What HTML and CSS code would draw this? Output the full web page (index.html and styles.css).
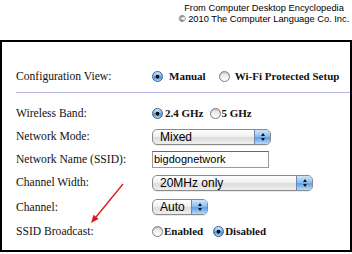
FILE: index.html
```html
<!DOCTYPE html>
<html>
<head>
<meta charset="utf-8">
<link rel="stylesheet" href="styles.css">
</head>
<body>
<div class="credit">
  <div>From Computer Desktop Encyclopedia</div>
  <div>© 2010 The Computer Language Co. Inc.</div>
</div>
<div class="panel">
  <div class="config">
    <span class="label">Configuration View:</span>
    <div class="opts">
      <span class="radio on"></span><span class="opt gap-l6">Manual</span>
      <span class="radio off ml13"></span><span class="opt gap-l5">Wi-Fi Protected Setup</span>
    </div>
  </div>
  <div class="divider"></div>
  <div class="grid">
    <span class="label">Wireless Band:</span>
    <div class="opts">
      <span class="radio on"></span><span class="opt gap-l2">2.4 GHz</span>
      <span class="radio off ml6"></span><span class="opt gap-l1">5 GHz</span>
    </div>

    <span class="label">Network Mode:</span>
    <div class="opts">
      <div class="select w119"><span class="sel-text">Mixed</span><span class="sel-btn"><i class="up"></i><i class="down"></i></span></div>
    </div>

    <span class="label">Network Name (SSID):</span>
    <div class="opts">
      <div class="textbox">bigdognetwork</div>
    </div>

    <span class="label">Channel Width:</span>
    <div class="opts">
      <div class="select w161"><span class="sel-text">20MHz only</span><span class="sel-btn"><i class="up"></i><i class="down"></i></span></div>
    </div>

    <span class="label">Channel:</span>
    <div class="opts">
      <div class="select w56"><span class="sel-text">Auto</span><span class="sel-btn"><i class="up"></i><i class="down"></i></span></div>
    </div>

    <span class="label">SSID Broadcast:</span>
    <div class="opts">
      <span class="radio off"></span><span class="opt gap-l1">Enabled</span>
      <span class="radio on ml10"></span><span class="opt gap-l1">Disabled</span>
    </div>
  </div>
</div>
<svg class="pointer" width="352" height="254" viewBox="0 0 352 254">
  <line x1="123" y1="184" x2="96" y2="217" stroke="#e3151b" stroke-width="1.3"/>
  <polygon points="91,223 98.6,218.9 93.6,214.7" fill="#e3151b"/>
</svg>
</body>
</html>
```

FILE: styles.css
```css
html, body {
  margin: 0;
  padding: 0;
  background: #fff;
}
body {
  position: relative;
  width: 352px;
  height: 254px;
  overflow: hidden;
}
.credit {
  box-sizing: border-box;
  height: 40px;
  margin-left: 176px;
  width: 176px;
  padding-top: 3px;
  text-align: center;
  font-family: "Liberation Sans", Arial, sans-serif;
  font-size: 9.3px;
  line-height: 11px;
  color: #000;
  white-space: nowrap;
}
.panel {
  box-sizing: border-box;
  height: 212px;
  border: 2px solid #000;
  padding-top: 22px;
}
.label {
  font-family: "Liberation Serif", "Times New Roman", serif;
  font-size: 11.6px;
  color: #111;
  white-space: nowrap;
}
.config {
  display: grid;
  grid-template-columns: 136px 1fr;
  align-items: center;
  height: 24px;
  padding-left: 14px;
}
.divider {
  height: 1px;
  background: #b3b3e6;
  margin: 4px 0 0 14px;
}
.grid {
  display: grid;
  grid-template-columns: 136px 1fr;
  grid-template-rows: 24px 23px 22px 25px 24px 24px;
  align-items: center;
  padding-left: 14px;
  padding-top: 8px;
}
.opts {
  display: flex;
  align-items: center;
  height: 100%;
}
.opt {
  font-family: "Liberation Serif", "Times New Roman", serif;
  font-weight: bold;
  font-size: 11px;
  color: #111;
  white-space: nowrap;
}
.gap-l1 { margin-left: 1px; }
.gap-l2 { margin-left: 2px; }
.gap-l5 { margin-left: 5px; }
.gap-l6 { margin-left: 6px; }
.ml6 { margin-left: 6px; }
.ml10 { margin-left: 10px; }
.ml13 { margin-left: 13px; }
.radio {
  box-sizing: border-box;
  width: 11px;
  height: 11px;
  border-radius: 50%;
  flex: none;
}
.radio.off {
  border: 1px solid #7d7d7d;
  background: linear-gradient(#dcdcdc, #f4f4f4 60%, #ffffff);
  box-shadow: inset 0 1px 1px rgba(0,0,0,0.15);
}
.radio.on {
  border: 1px solid #3d5f8c;
  background:
    radial-gradient(circle at 50% 52%, #0c0c0c 0, #0c0c0c 1.6px, transparent 2.2px),
    linear-gradient(#d6e8fa, #7eb6ec 45%, #4d8fdb 55%, #a9d6f8);
}
.select {
  box-sizing: border-box;
  height: 16px;
  display: flex;
  border: 1px solid #8a8a8a;
  border-radius: 5px;
  overflow: hidden;
  background: linear-gradient(#ffffff, #f1f1f1 45%, #dcdcdc 55%, #eeeeee);
  box-shadow: 0 1px 0 rgba(0,0,0,0.08);
}
.w119 { width: 119px; }
.w161 { width: 161px; }
.w56 { width: 56px; }
.sel-text {
  flex: 1;
  font-family: "Liberation Sans", Arial, sans-serif;
  font-size: 12px;
  line-height: 14px;
  padding-left: 7px;
  color: #000;
}
.sel-btn {
  width: 15px;
  flex: none;
  border-left: 1px solid #6f86ad;
  background: linear-gradient(#cfe4fa, #8fc0f0 45%, #5f9ee6 55%, #b5dcfb);
  display: flex;
  flex-direction: column;
  align-items: center;
  justify-content: center;
  gap: 2px;
}
.sel-btn i {
  display: block;
  width: 0;
  height: 0;
  border-left: 2.5px solid transparent;
  border-right: 2.5px solid transparent;
}
.sel-btn .up { border-bottom: 3px solid #111; }
.sel-btn .down { border-top: 3px solid #111; }
.textbox {
  box-sizing: border-box;
  width: 117px;
  height: 17px;
  border: 1px solid #9a9a9a;
  border-top-color: #6a6a6a;
  background: #fff;
  font-family: "Liberation Sans", Arial, sans-serif;
  font-size: 11px;
  line-height: 15px;
  padding-left: 1px;
  color: #000;
}
.pointer {
  position: absolute;
  left: 0;
  top: 0;
  pointer-events: none;
}
```
